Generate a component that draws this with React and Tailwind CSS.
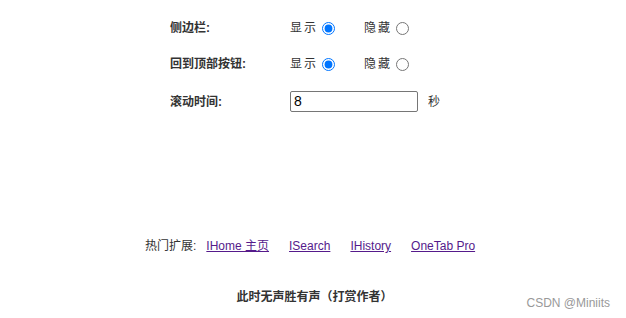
export default function App() {
  const links = ['IHome 主页', 'ISearch', 'IHistory', 'OneTab Pro'];

  return (
    <div
      className="relative w-[626px] h-[318px] bg-white text-[#333] text-[12px]"
      style={{ fontFamily: '"Liberation Sans", "Noto Sans CJK SC", sans-serif' }}
    >
      {/* settings */}
      <div className="pl-[170px] pt-[18px] flex flex-col gap-[16px]">
        <div className="flex items-center h-[20px]">
          <span className="w-[120px] font-bold">侧边栏:</span>
          <label className="flex items-center tracking-[2px]">
            显示
            <input type="radio" name="side" defaultChecked className="ml-[4px] w-[13px] h-[13px] accent-[#0075ff]" />
          </label>
          <label className="flex items-center tracking-[2px] ml-[29px]">
            隐藏
            <input type="radio" name="side" className="ml-[4px] w-[13px] h-[13px]" />
          </label>
        </div>
        <div className="flex items-center h-[20px]">
          <span className="w-[120px] font-bold">回到顶部按钮:</span>
          <label className="flex items-center tracking-[2px]">
            显示
            <input type="radio" name="top" defaultChecked className="ml-[4px] w-[13px] h-[13px] accent-[#0075ff]" />
          </label>
          <label className="flex items-center tracking-[2px] ml-[29px]">
            隐藏
            <input type="radio" name="top" className="ml-[4px] w-[13px] h-[13px]" />
          </label>
        </div>
        <div className="flex items-center h-[21px] mt-[1px]">
          <span className="w-[120px] font-bold">滚动时间:</span>
          <input
            type="text"
            defaultValue="8"
            className="w-[128px] h-[21px] border border-[#767676] rounded-[2px] px-[3px] text-[14px] text-black outline-none"
          />
          <span className="ml-[10px]">秒</span>
        </div>
      </div>

      {/* hot extensions */}
      <div className="mt-[124px] pl-[145px] flex items-center h-[20px]">
        <span className="mr-[10px]">热门扩展:</span>
        <div className="flex gap-[20px]">
          {links.map((l) => (
            <a key={l} href="#" className="text-[#551a8b] underline">
              {l}
            </a>
          ))}
        </div>
      </div>

      <div className="mt-[32px] pl-[3px] text-center font-bold">此时无声胜有声（打赏作者）</div>

      <div className="absolute right-[16px] bottom-[6px] text-[12px] text-[#999]">CSDN @Miniits</div>
    </div>
  );
}
